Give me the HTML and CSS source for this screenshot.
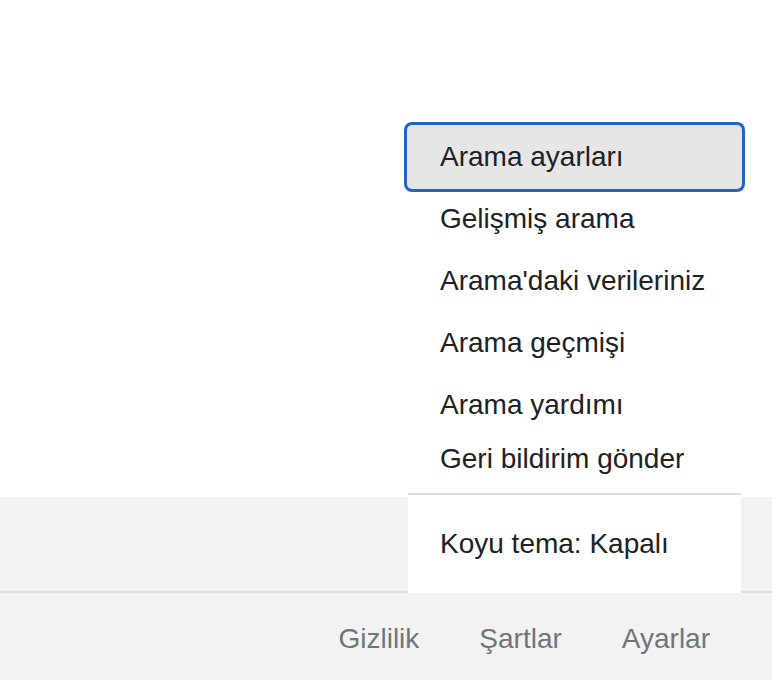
FILE: index.html
```html
<!DOCTYPE html>
<html lang="tr">
<head>
<meta charset="utf-8">
<title>Ayarlar</title>
<link rel="stylesheet" href="styles.css">
</head>
<body>
<div class="page">
  <div class="content"></div>
  <footer class="footer">
    <div class="footer-top"></div>
    <div class="footer-bottom">
      <a class="flink" href="#">Gizlilik</a>
      <a class="flink" href="#">Şartlar</a>
      <a class="flink" href="#">Ayarlar</a>
    </div>
  </footer>
  <div class="menu">
    <div class="menu-section">
      <a class="item item-focus" href="#">Arama ayarları</a>
      <a class="item" href="#">Gelişmiş arama</a>
      <a class="item" href="#">Arama'daki verileriniz</a>
      <a class="item" href="#">Arama geçmişi</a>
      <a class="item" href="#">Arama yardımı</a>
      <a class="item item-short" href="#">Geri bildirim gönder</a>
    </div>
    <div class="menu-section menu-section-last">
      <a class="item" href="#">Koyu tema: Kapalı</a>
    </div>
  </div>
</div>
</body>
</html>
```
FILE: styles.css
```css
html, body {
  margin: 0;
  padding: 0;
  background: #ffffff;
  font-family: "Liberation Sans", Arial, Helvetica, sans-serif;
}

.page {
  position: relative;
  width: 772px;
  height: 680px;
  overflow: hidden;
  display: flex;
  flex-direction: column;
}

.content {
  height: 497px;
  background: #ffffff;
}

.footer {
  flex: 1;
  background: #f2f2f2;
  display: flex;
  flex-direction: column;
}

.footer-top {
  height: 94px;
  border-bottom: 2px solid #dadce0;
}

.footer-bottom {
  flex: 1;
  display: flex;
  justify-content: flex-end;
  align-items: flex-start;
  gap: 60px;
  padding: 30px 62px 0 0;
}

.flink {
  font-size: 28px;
  line-height: 31px;
  color: #70757a;
  text-decoration: none;
}

.menu {
  position: absolute;
  left: 408px;
  top: 126px;
  width: 333px;
  height: 467px;
  background: #ffffff;
  display: flex;
  flex-direction: column;
}

.menu-section {
  display: flex;
  flex-direction: column;
}

.menu-section-last {
  border-top: 2px solid #dadce0;
  margin-top: 12px;
  padding-top: 18px;
}

.item {
  display: block;
  height: 62px;
  line-height: 62px;
  padding-left: 32px;
  font-size: 28px;
  color: #202124;
  text-decoration: none;
  white-space: nowrap;
}

.item-short {
  height: 45px;
  line-height: 46px;
}

.item-focus {
  background: #e6e6e6;
  border-radius: 4px;
  box-shadow: 0 0 0 1px #e6e6e6, 0 0 0 4px #1f63cf;
}
```
